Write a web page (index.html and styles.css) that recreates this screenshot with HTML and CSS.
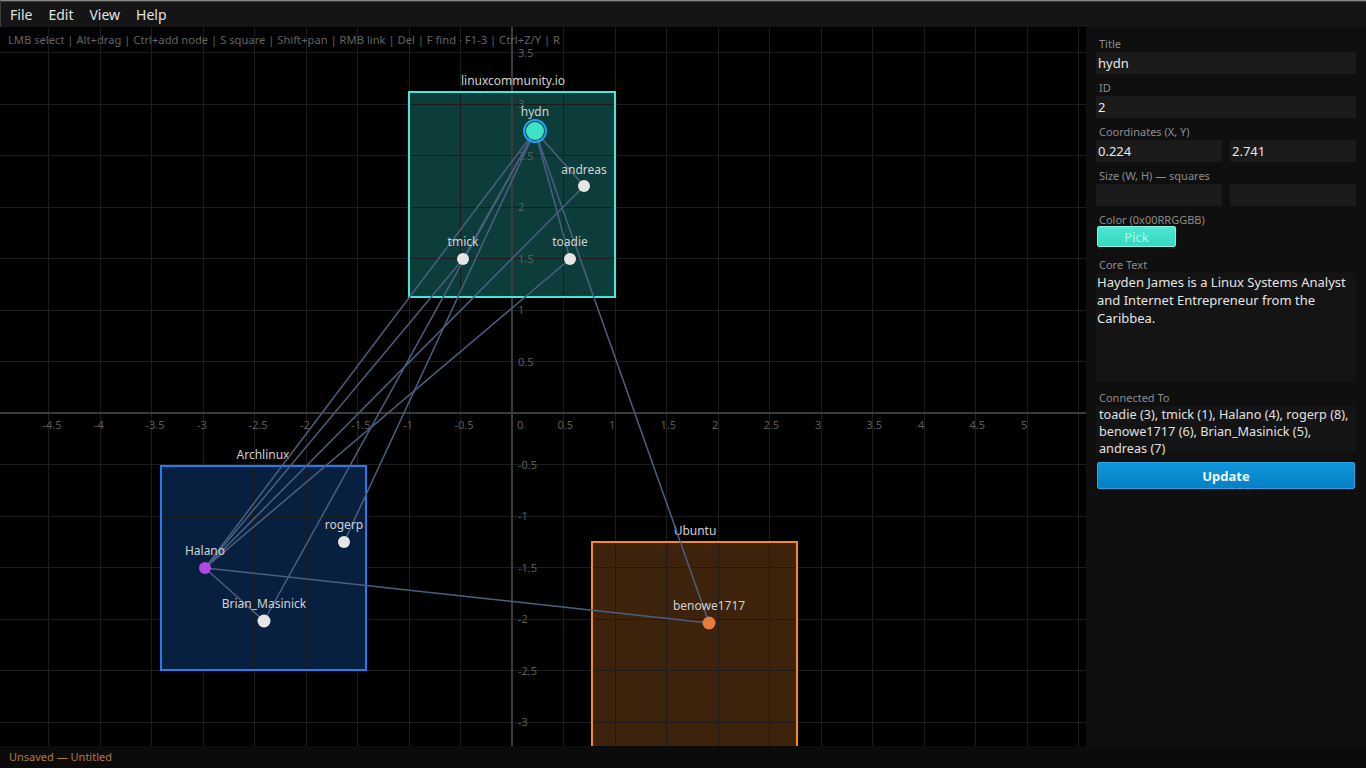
FILE: index.html
```html
<!DOCTYPE html>
<html lang="en">
<head>
    <meta charset="UTF-8">
    <meta name="viewport" content="width=device-width, initial-scale=1.0">
    <title>Node Graph Editor</title>
    <link rel="stylesheet" href="styles.css">
</head>
<body>
<div class="app">
    <div class="menubar">
        <span class="menu-item">File</span>
        <span class="menu-item">Edit</span>
        <span class="menu-item">View</span>
        <span class="menu-item">Help</span>
    </div>

    <div class="workspace">
        <!-- graph canvas -->
        <div class="canvas">
            <svg class="board" viewBox="0 0 1086 719" width="1086" height="719">
                <!-- group squares (fill) -->
                <rect class="group-fill teal" x="409" y="65" width="206" height="205"/>
                <rect class="group-fill blue" x="161" y="439" width="205" height="204"/>
                <rect class="group-fill orange" x="592" y="515" width="205" height="220"/>

                <!-- grid -->
                <g class="grid">
                    <line x1="48.5" y1="0" x2="48.5" y2="719"/>
                    <line x1="100" y1="0" x2="100" y2="719"/>
                    <line x1="151.5" y1="0" x2="151.5" y2="719"/>
                    <line x1="203" y1="0" x2="203" y2="719"/>
                    <line x1="254.5" y1="0" x2="254.5" y2="719"/>
                    <line x1="306" y1="0" x2="306" y2="719"/>
                    <line x1="357.5" y1="0" x2="357.5" y2="719"/>
                    <line x1="409" y1="0" x2="409" y2="719"/>
                    <line x1="460.5" y1="0" x2="460.5" y2="719"/>
                    <line x1="563.5" y1="0" x2="563.5" y2="719"/>
                    <line x1="615" y1="0" x2="615" y2="719"/>
                    <line x1="666.5" y1="0" x2="666.5" y2="719"/>
                    <line x1="718" y1="0" x2="718" y2="719"/>
                    <line x1="769.5" y1="0" x2="769.5" y2="719"/>
                    <line x1="821" y1="0" x2="821" y2="719"/>
                    <line x1="872.5" y1="0" x2="872.5" y2="719"/>
                    <line x1="924" y1="0" x2="924" y2="719"/>
                    <line x1="975.5" y1="0" x2="975.5" y2="719"/>
                    <line x1="1027" y1="0" x2="1027" y2="719"/>
                    <line x1="1078.5" y1="0" x2="1078.5" y2="719"/>

                    <line x1="0" y1="25.5" x2="1086" y2="25.5"/>
                    <line x1="0" y1="77" x2="1086" y2="77"/>
                    <line x1="0" y1="128.5" x2="1086" y2="128.5"/>
                    <line x1="0" y1="180" x2="1086" y2="180"/>
                    <line x1="0" y1="231.5" x2="1086" y2="231.5"/>
                    <line x1="0" y1="283" x2="1086" y2="283"/>
                    <line x1="0" y1="334.5" x2="1086" y2="334.5"/>
                    <line x1="0" y1="437.5" x2="1086" y2="437.5"/>
                    <line x1="0" y1="489" x2="1086" y2="489"/>
                    <line x1="0" y1="540.5" x2="1086" y2="540.5"/>
                    <line x1="0" y1="592" x2="1086" y2="592"/>
                    <line x1="0" y1="643.5" x2="1086" y2="643.5"/>
                    <line x1="0" y1="695" x2="1086" y2="695"/>
                </g>

                <!-- axes -->
                <g class="axis">
                    <line x1="512" y1="0" x2="512" y2="719"/>
                    <line x1="0" y1="386" x2="1086" y2="386"/>
                </g>

                <!-- group borders -->
                <rect class="group-line teal" x="409" y="65" width="206" height="205"/>
                <rect class="group-line blue" x="161" y="439" width="205" height="204"/>
                <rect class="group-line orange" x="592" y="515" width="205" height="220"/>

                <!-- axis labels -->
                <g class="tick">
                    <text x="42.5" y="402">-4.5</text>
                    <text x="94" y="402">-4</text>
                    <text x="145.5" y="402">-3.5</text>
                    <text x="197" y="402">-3</text>
                    <text x="248.5" y="402">-2.5</text>
                    <text x="300" y="402">-2</text>
                    <text x="351.5" y="402">-1.5</text>
                    <text x="403" y="402">-1</text>
                    <text x="454.5" y="402">-0.5</text>
                    <text x="517" y="402">0</text>
                    <text x="557.5" y="402">0.5</text>
                    <text x="609" y="402">1</text>
                    <text x="660.5" y="402">1.5</text>
                    <text x="712" y="402">2</text>
                    <text x="763.5" y="402">2.5</text>
                    <text x="815" y="402">3</text>
                    <text x="866.5" y="402">3.5</text>
                    <text x="918" y="402">4</text>
                    <text x="969.5" y="402">4.5</text>
                    <text x="1021" y="402">5</text>

                    <text x="518" y="29.5">3.5</text>
                    <text x="518" y="81">3</text>
                    <text x="518" y="132.5">2.5</text>
                    <text x="518" y="184">2</text>
                    <text x="518" y="235.5">1.5</text>
                    <text x="518" y="287">1</text>
                    <text x="518" y="338.5">0.5</text>
                    <text x="518" y="441.5">-0.5</text>
                    <text x="518" y="493">-1</text>
                    <text x="518" y="544.5">-1.5</text>
                    <text x="518" y="596">-2</text>
                    <text x="518" y="647.5">-2.5</text>
                    <text x="518" y="699">-3</text>
                </g>

                <text class="hint" x="8" y="17">LMB select | Alt+drag | Ctrl+add node | S square | Shift+pan | RMB link | Del | F find · F1-3 | Ctrl+Z/Y | R</text>

                <!-- group titles -->
                <g class="group-title">
                    <text x="513" y="58">linuxcommunity.io</text>
                    <text x="263" y="432">Archlinux</text>
                    <text x="695" y="508">Ubuntu</text>
                </g>

                <!-- links -->
                <g class="edge">
                    <line x1="535" y1="104" x2="570" y2="232"/>
                    <line x1="535" y1="104" x2="463" y2="232"/>
                    <line x1="535" y1="104" x2="205" y2="541"/>
                    <line x1="535" y1="104" x2="344" y2="515"/>
                    <line x1="535" y1="104" x2="709" y2="596"/>
                    <line x1="535" y1="104" x2="264" y2="594"/>
                    <line x1="535" y1="104" x2="584" y2="159"/>
                    <line x1="205" y1="541" x2="463" y2="232"/>
                    <line x1="205" y1="541" x2="570" y2="232"/>
                    <line x1="205" y1="541" x2="584" y2="159"/>
                    <line x1="205" y1="541" x2="709" y2="596"/>
                    <line x1="205" y1="541" x2="264" y2="594"/>
                </g>

                <!-- nodes -->
                <circle class="node" cx="584" cy="159" r="6"/>
                <circle class="node" cx="463" cy="232" r="6"/>
                <circle class="node" cx="570" cy="232" r="6"/>
                <circle class="node" cx="344" cy="515" r="6"/>
                <circle class="node" cx="264" cy="594" r="6.5"/>
                <circle class="node purple" cx="205" cy="541" r="6"/>
                <circle class="node amber" cx="709" cy="596" r="6.5"/>
                <circle class="node selected" cx="535" cy="104" r="9"/>
                <circle class="ring" cx="535" cy="104" r="11"/>

                <g class="node-label">
                    <text x="535" y="89">hydn</text>
                    <text x="584" y="147">andreas</text>
                    <text x="463" y="219">tmick</text>
                    <text x="570" y="219">toadie</text>
                    <text x="205" y="528">Halano</text>
                    <text x="344" y="502">rogerp</text>
                    <text x="264" y="581">Brian_Masinick</text>
                    <text x="709" y="583">benowe1717</text>
                </g>
            </svg>
        </div>

        <!-- node properties -->
        <div class="panel">
            <div class="field-label">Title</div>
            <input class="field" type="text" value="hydn">

            <div class="field-label">ID</div>
            <input class="field" type="text" value="2">

            <div class="field-label">Coordinates (X, Y)</div>
            <div class="pair">
                <input class="field" type="text" value="0.224">
                <input class="field" type="text" value="2.741">
            </div>

            <div class="field-label">Size (W, H) — squares</div>
            <div class="pair">
                <input class="field" type="text" value="">
                <input class="field" type="text" value="">
            </div>

            <div class="field-label">Color (0x00RRGGBB)</div>
            <button class="pick-button">Pick</button>

            <div class="field-label">Core Text</div>
            <textarea class="core-text">Hayden James is a Linux Systems Analyst and Internet Entrepreneur from the Caribbea.</textarea>

            <div class="field-label">Connected To</div>
            <div class="links-box">toadie (3), tmick (1), Halano (4), rogerp (8), benowe1717 (6), Brian_Masinick (5), andreas (7)</div>

            <button class="update-button">Update</button>
        </div>
    </div>

    <div class="statusbar">Unsaved — Untitled</div>
</div>
</body>
</html>
```

FILE: styles.css
```css
body {
    margin: 0;
    background-color: #000;
    color: #ddd;
    font-family: "Noto Sans", "DejaVu Sans", sans-serif;
    overflow: hidden;
}

.app {
    display: flex;
    flex-direction: column;
    height: 100vh;
}

/* menu bar */
.menubar {
    display: flex;
    align-items: center;
    height: 26px;
    padding-left: 1px;
    background-color: #151515;
    border-top: 1px solid #858585;
    box-shadow: inset 0 1px 0 #3a3a3a;
    border-left: 1px solid #3c3c3c;
    flex-shrink: 0;
}

.menu-item {
    padding: 0 8px;
    font-size: 14px;
    color: #e2e2e2;
}

.workspace {
    display: flex;
    flex: 1;
    min-height: 0;
}

/* canvas */
.canvas {
    flex: 1;
    background-color: #000;
    overflow: hidden;
}

.board {
    display: block;
}

.grid line {
    stroke: #1c1c1c;
    stroke-width: 1;
    shape-rendering: crispEdges;
}

.axis line {
    stroke: #3b3b3b;
    stroke-width: 2;
    shape-rendering: crispEdges;
}

.group-fill.teal { fill: #0c3d3b; }
.group-fill.blue { fill: #07203f; }
.group-fill.orange { fill: #3d230c; }

.group-line {
    fill: none;
    stroke-width: 2;
}
.group-line.teal { stroke: #45e6dc; }
.group-line.blue { stroke: #1f7ef0; }
.group-line.orange { stroke: #f68a22; }

.tick text {
    font-size: 11px;
    fill: #5c5c5c;
}

.hint {
    font-size: 11.2px;
    fill: #646464;
}

.group-title text {
    font-size: 12px;
    fill: #d0d0d0;
    text-anchor: middle;
}

.edge line {
    stroke: #4d5f80;
    stroke-width: 1.5;
}

.node { fill: #e6e6e6; }
.node.purple { fill: #b349e2; }
.node.amber { fill: #e97a3c; }
.node.selected { fill: #3fe2c4; }

.ring {
    fill: none;
    stroke: #16a6f4;
    stroke-width: 2;
}

.node-label text {
    font-size: 12px;
    fill: #d2d2d2;
    text-anchor: middle;
}

/* side panel */
.panel {
    width: 260px;
    padding: 3px 10px 0 10px;
    background-color: #0f0f0f;
    display: flex;
    flex-direction: column;
}

.field-label {
    padding: 7px 3px 1px;
    font-size: 11px;
    line-height: 14px;
    color: #8c8c8c;
}

.field {
    box-sizing: border-box;
    width: 100%;
    height: 22px;
    margin: 0;
    padding: 0 2px;
    border: none;
    outline: none;
    background-color: #1a1a1a;
    color: #e8e8e8;
    font-family: "Noto Sans", "DejaVu Sans", sans-serif;
    font-size: 13px;
}

.pair {
    display: grid;
    grid-template-columns: 1fr 1fr;
    gap: 8px;
}

.pick-button {
    width: 79px;
    height: 21px;
    margin: -2px 0 4px 1px;
    padding: 0;
    border: 1px solid #86f2e2;
    border-radius: 2px;
    background: linear-gradient(#4ce8d0, #36d8c0);
    color: #b8f6ea;
    font-family: "Noto Sans", "DejaVu Sans", sans-serif;
    font-size: 13px;
    line-height: 18px;
}

.core-text {
    box-sizing: border-box;
    width: 100%;
    height: 109px;
    margin: 0 0 2px 0;
    padding: 0 1px;
    border: none;
    outline: none;
    resize: none;
    overflow: hidden;
    background-color: #141414;
    color: #e4e4e4;
    font-family: "Noto Sans", "DejaVu Sans", sans-serif;
    font-size: 13px;
    line-height: 18px;
}

.links-box {
    height: 47px;
    padding: 0 3px;
    background-color: #141414;
    color: #e0e0e0;
    font-size: 12.7px;
    line-height: 17px;
}

.update-button {
    height: 27px;
    margin: 9px 1px 0 1px;
    padding: 0;
    border: 1px solid #2aa4e6;
    border-radius: 2px;
    background: linear-gradient(#0e95da, #0680c4);
    color: #f2f8ff;
    font-family: "Noto Sans", "DejaVu Sans", sans-serif;
    font-size: 13px;
    font-weight: bold;
}

/* status bar */
.statusbar {
    height: 22px;
    padding-left: 9px;
    background-color: #0b0b0b;
    color: #b47a42;
    font-size: 11px;
    line-height: 22px;
    flex-shrink: 0;
}
```
